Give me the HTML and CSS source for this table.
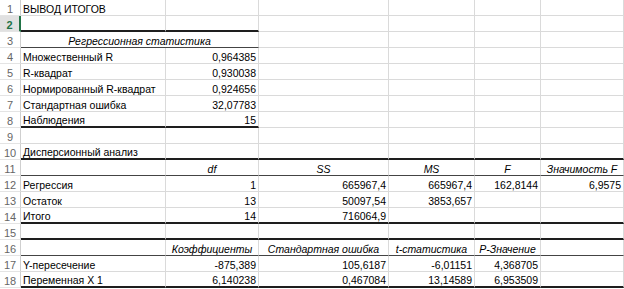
FILE: index.html
```html
<!DOCTYPE html>
<html lang="ru">
<head>
<meta charset="utf-8">
<title>Вывод итогов</title>
<link rel="stylesheet" href="styles.css">
</head>
<body>
<div class="sheet">
  <div class="rh">1</div><div class="c">ВЫВОД ИТОГОВ</div><div class="c"></div><div class="c"></div><div class="c"></div><div class="c"></div><div class="c"></div>
  <div class="rh sel">2</div><div class="c tk active"></div><div class="c tk"></div><div class="c"></div><div class="c"></div><div class="c"></div><div class="c"></div>
  <div class="rh">3</div><div class="c hd span2 tn">Регрессионная статистика</div><div class="c"></div><div class="c"></div><div class="c"></div><div class="c"></div>
  <div class="rh">4</div><div class="c">Множественный R</div><div class="c n">0,964385</div><div class="c"></div><div class="c"></div><div class="c"></div><div class="c"></div>
  <div class="rh">5</div><div class="c">R-квадрат</div><div class="c n">0,930038</div><div class="c"></div><div class="c"></div><div class="c"></div><div class="c"></div>
  <div class="rh">6</div><div class="c">Нормированный R-квадрат</div><div class="c n">0,924656</div><div class="c"></div><div class="c"></div><div class="c"></div><div class="c"></div>
  <div class="rh">7</div><div class="c">Стандартная ошибка</div><div class="c n">32,07783</div><div class="c"></div><div class="c"></div><div class="c"></div><div class="c"></div>
  <div class="rh">8</div><div class="c tk">Наблюдения</div><div class="c n tk">15</div><div class="c"></div><div class="c"></div><div class="c"></div><div class="c"></div>
  <div class="rh">9</div><div class="c"></div><div class="c"></div><div class="c"></div><div class="c"></div><div class="c"></div><div class="c"></div>
  <div class="rh">10</div><div class="c tk">Дисперсионный анализ</div><div class="c tk"></div><div class="c tk"></div><div class="c tk"></div><div class="c tk"></div><div class="c tk"></div>
  <div class="rh">11</div><div class="c tn"></div><div class="c hd tn">df</div><div class="c hd tn">SS</div><div class="c hd tn">MS</div><div class="c hd tn">F</div><div class="c hd tn">Значимость F</div>
  <div class="rh">12</div><div class="c">Регрессия</div><div class="c n">1</div><div class="c n">665967,4</div><div class="c n">665967,4</div><div class="c n">162,8144</div><div class="c n">6,9575</div>
  <div class="rh">13</div><div class="c">Остаток</div><div class="c n">13</div><div class="c n">50097,54</div><div class="c n">3853,657</div><div class="c"></div><div class="c"></div>
  <div class="rh">14</div><div class="c tk">Итого</div><div class="c n tk">14</div><div class="c n tk">716064,9</div><div class="c tk"></div><div class="c tk"></div><div class="c tk"></div>
  <div class="rh">15</div><div class="c tk"></div><div class="c tk"></div><div class="c tk"></div><div class="c tk"></div><div class="c tk"></div><div class="c tk"></div>
  <div class="rh">16</div><div class="c tn"></div><div class="c hd tn">Коэффициенты</div><div class="c hd tn">Стандартная ошибка</div><div class="c hd tn">t-статистика</div><div class="c hd tn">P-Значение</div><div class="c tn"></div>
  <div class="rh">17</div><div class="c">Y-пересечение</div><div class="c n">-875,389</div><div class="c n">105,6187</div><div class="c n">-6,01151</div><div class="c n">4,368705</div><div class="c"></div>
  <div class="rh">18</div><div class="c tk">Переменная X 1</div><div class="c n tk">6,140238</div><div class="c n tk">0,467084</div><div class="c n tk">13,14589</div><div class="c n tk">6,953509</div><div class="c tk"></div>
</div>
</body>
</html>
```

FILE: styles.css
```css
html, body {
  margin: 0;
  padding: 0;
  background: #ffffff;
}

.sheet {
  display: grid;
  grid-template-columns: 21px 145px 93px 130px 86px 66px 83px;
  grid-auto-rows: 16px;
  font-family: "Liberation Sans", Arial, sans-serif;
  font-size: 10.5px;
  color: #000000;
}

.rh,
.c {
  box-sizing: border-box;
  border-right: 1px solid #dadada;
  border-bottom: 1px solid #dadada;
  display: flex;
  align-items: flex-end;
  line-height: 12px;
  white-space: nowrap;
  overflow: visible;
}

.rh {
  justify-content: center;
  color: #666666;
  font-size: 11px;
  border-right-color: #cfcfcf;
  border-bottom-color: #e4e4e4;
}

.rh.sel {
  background: #e1e1e1;
  color: #217346;
  font-weight: bold;
  border-right: 2px solid #217346;
}

.c {
  padding: 0 2px 0 2px;
}

.n {
  justify-content: flex-end;
}

.hd {
  justify-content: center;
  font-style: italic;
}

.span2 {
  grid-column: span 2;
}

.tk {
  border-bottom: 2px solid #1e1e1e;
}

.tn {
  border-bottom: 1px solid #444444;
}
```
